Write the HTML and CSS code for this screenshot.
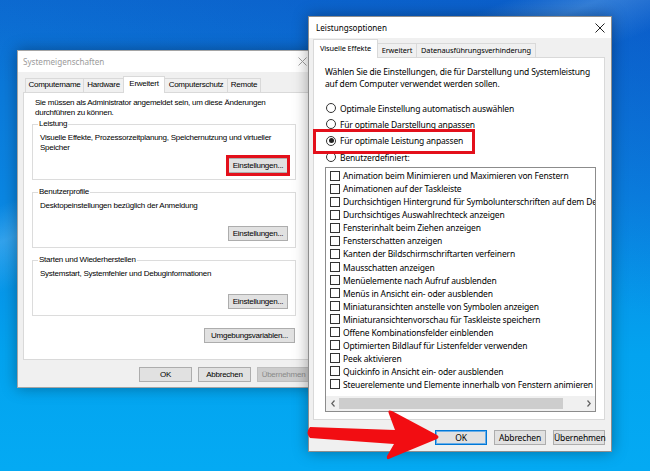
FILE: index.html
```html
<!DOCTYPE html>
<html lang="de">
<head>
    <meta charset="UTF-8">
    <meta name="viewport" content="width=device-width, initial-scale=1.0">
    <title>Leistungsoptionen</title>
    <link rel="stylesheet" href="styles.css">
</head>
<body>
    <div class="desktop">

        <!-- Systemeigenschaften (inaktiv) -->
        <section class="window window-sys">
            <div class="titlebar">
                <span class="title">Systemeigenschaften</span>
                <span class="close"><svg width="9" height="9" viewBox="0 0 9 9"><path d="M0.5 0.5L8.5 8.5M8.5 0.5L0.5 8.5"/></svg></span>
            </div>
            <div class="window-body">
                <ul class="tabs">
                    <li class="tab tab-computername">Computername</li>
                    <li class="tab tab-hardware">Hardware</li>
                    <li class="tab tab-active tab-erweitert">Erweitert</li>
                    <li class="tab tab-schutz">Computerschutz</li>
                    <li class="tab tab-remote">Remote</li>
                </ul>
                <div class="tab-panel">
                    <p class="intro">Sie müssen als Administrator angemeldet sein, um diese Änderungen<br>durchführen zu können.</p>

                    <fieldset class="group">
                        <legend>Leistung</legend>
                        <p>Visuelle Effekte, Prozessorzeitplanung, Speichernutzung und virtueller<br>Speicher</p>
                        <div class="group-actions"><button class="btn btn-settings">Einstellungen...</button></div>
                    </fieldset>

                    <fieldset class="group">
                        <legend>Benutzerprofile</legend>
                        <p>Desktopeinstellungen bezüglich der Anmeldung</p>
                        <div class="group-actions"><button class="btn btn-settings">Einstellungen...</button></div>
                    </fieldset>

                    <fieldset class="group">
                        <legend>Starten und Wiederherstellen</legend>
                        <p>Systemstart, Systemfehler und Debuginformationen</p>
                        <div class="group-actions"><button class="btn btn-settings">Einstellungen...</button></div>
                    </fieldset>

                    <div class="env-row"><button class="btn btn-env">Umgebungsvariablen...</button></div>
                </div>
                <div class="dialog-buttons">
                    <button class="btn">OK</button>
                    <button class="btn">Abbrechen</button>
                    <button class="btn btn-disabled">Übernehmen</button>
                </div>
            </div>
        </section>

        <!-- Leistungsoptionen (aktiv) -->
        <section class="window window-perf">
            <div class="titlebar">
                <span class="title">Leistungsoptionen</span>
                <span class="close"><svg width="10" height="10" viewBox="0 0 10 10"><path d="M0.5 0.5L9.5 9.5M9.5 0.5L0.5 9.5"/></svg></span>
            </div>
            <div class="window-body">
                <ul class="tabs">
                    <li class="tab tab-active tab-visual">Visuelle Effekte</li>
                    <li class="tab tab-advanced">Erweitert</li>
                    <li class="tab tab-dep">Datenausführungsverhinderung</li>
                </ul>
                <div class="tab-panel">
                    <p class="intro">Wählen Sie die Einstellungen, die für Darstellung und Systemleistung<br>auf dem Computer verwendet werden sollen.</p>

                    <ul class="radios">
                        <li><span class="radio"></span>Optimale Einstellung automatisch auswählen</li>
                        <li><span class="radio"></span>Für optimale Darstellung anpassen</li>
                        <li><span class="radio radio-checked"></span>Für optimale Leistung anpassen</li>
                        <li><span class="radio"></span>Benutzerdefiniert:</li>
                    </ul>

                    <div class="listbox">
                        <ul class="checklist">
                            <li><span class="check"></span>Animation beim Minimieren und Maximieren von Fenstern</li>
                            <li><span class="check"></span>Animationen auf der Taskleiste</li>
                            <li><span class="check"></span>Durchsichtigen Hintergrund für Symbolunterschriften auf dem Desktop verwenden</li>
                            <li><span class="check"></span>Durchsichtiges Auswahlrechteck anzeigen</li>
                            <li><span class="check"></span>Fensterinhalt beim Ziehen anzeigen</li>
                            <li><span class="check"></span>Fensterschatten anzeigen</li>
                            <li><span class="check"></span>Kanten der Bildschirmschriftarten verfeinern</li>
                            <li><span class="check"></span>Mausschatten anzeigen</li>
                            <li><span class="check"></span>Menüelemente nach Aufruf ausblenden</li>
                            <li><span class="check"></span>Menüs in Ansicht ein- oder ausblenden</li>
                            <li><span class="check"></span>Miniaturansichten anstelle von Symbolen anzeigen</li>
                            <li><span class="check"></span>Miniaturansichtenvorschau für Taskleiste speichern</li>
                            <li><span class="check"></span>Offene Kombinationsfelder einblenden</li>
                            <li><span class="check"></span>Optimierten Bildlauf für Listenfelder verwenden</li>
                            <li><span class="check"></span>Peek aktivieren</li>
                            <li><span class="check"></span>Quickinfo in Ansicht ein- oder ausblenden</li>
                            <li><span class="check"></span>Steuerelemente und Elemente innerhalb von Fenstern animieren</li>
                        </ul>
                        <div class="hscroll">
                            <span class="scroll-arrow"><svg width="4" height="7" viewBox="0 0 4 7"><path d="M3.5 0.5L0.8 3.5L3.5 6.5"/></svg></span>
                            <span class="scroll-track"><span class="scroll-thumb"></span></span>
                            <span class="scroll-arrow"><svg width="4" height="7" viewBox="0 0 4 7"><path d="M0.5 0.5L3.2 3.5L0.5 6.5"/></svg></span>
                        </div>
                    </div>
                </div>
                <div class="dialog-buttons">
                    <button class="btn btn-default">OK</button>
                    <button class="btn">Abbrechen</button>
                    <button class="btn">Übernehmen</button>
                </div>
            </div>
        </section>

        <!-- Markierungen -->
        <div class="highlight highlight-settings"></div>
        <div class="highlight highlight-option"></div>
        <svg class="pointer-arrow" width="150" height="70" viewBox="0 0 150 70">
            <path d="M10 27 L95 30 L89 14 Q87 9 92 11 L137 35 Q140 37 137 39 L91 58 Q86 61 87 56 L94 44 L10 38 Q5 33 10 27 Z"/>
        </svg>
    </div>
</body>
</html>
```

FILE: styles.css
```css
* {
    margin: 0;
    padding: 0;
    box-sizing: border-box;
}

html, body {
    width: 650px;
    height: 471px;
    overflow: hidden;
}

body {
    font-family: "Liberation Sans", Arial, sans-serif;
    color: #000;
}

.desktop {
    position: relative;
    width: 650px;
    height: 471px;
    background:
        linear-gradient(158deg, rgba(255,255,255,0) 28%, rgba(160,215,255,0.28) 33%, rgba(255,255,255,0) 40%),
        linear-gradient(200deg, rgba(10,70,190,0.45) 0%, rgba(10,70,190,0) 45%),
        linear-gradient(180deg, #0c6ed2 0%, #0a86e2 42%, #03a3ef 75%, #04aaf3 100%);
}

/* Fenster */

.window {
    position: absolute;
    display: flex;
    flex-direction: column;
    background: #f0f0f0;
    box-shadow: 0 0 14px rgba(0,0,0,0.35);
}

.window-sys {
    left: 17px;
    top: 50px;
    width: 301px;
    height: 338px;
    border: 1px solid #a5a5a5;
    z-index: 1;
    font-size: 8px;
    letter-spacing: -0.25px;
}

.window-perf {
    left: 308px;
    top: 16px;
    width: 304px;
    height: 436px;
    border: 1px solid #8e8e8e;
    z-index: 2;
    font-family: "Noto Sans", "Open Sans", sans-serif;
    font-size: 8.5px;
    letter-spacing: -0.15px;
}

.titlebar {
    flex: none;
    height: 21px;
    display: flex;
    align-items: center;
    justify-content: space-between;
    background: #fff;
    font-family: "Noto Sans", sans-serif;
    font-size: 8.1px;
    letter-spacing: 0;
}

.window-sys .titlebar {
    padding-left: 5px;
    color: #9b9b9b;
}

.window-perf .titlebar {
    padding-left: 7px;
}

.close {
    display: flex;
    align-items: center;
    justify-content: center;
    height: 100%;
}

.window-sys .close {
    width: 30px;
}

.window-perf .close {
    width: 22px;
}

.close path {
    fill: none;
    stroke-width: 1;
}

.window-sys .close path {
    stroke: #a0a0a0;
}

.window-perf .close path {
    stroke: #222;
}

.window-body {
    flex: 1;
    display: flex;
    flex-direction: column;
}

.window-sys .window-body {
    padding: 4px 5px 0 5px;
}

.window-perf .window-body {
    padding: 1px 6px 0 4px;
}

/* Reiter */

.tabs {
    list-style: none;
    display: flex;
    align-items: flex-end;
    height: 16px;
    padding-left: 2px;
}

.tab {
    height: 14px;
    line-height: 12px;
    text-align: center;
    white-space: nowrap;
    background: #f0f0f0;
    border: 1px solid #d9d9d9;
    border-bottom: none;
    margin-right: -1px;
}

.tab-active {
    position: relative;
    z-index: 1;
    height: 17px;
    line-height: 14px;
    margin-bottom: -1px;
    background: #fff;
}

.tab-computername { width: 59px; }
.tab-hardware { width: 41px; }
.tab-erweitert { width: 42px; }
.tab-schutz { width: 64px; }
.tab-remote { width: 34px; }

.window-perf .tabs {
    height: 18px;
    padding-left: 0;
}

.window-perf .tab {
    font-size: 7.4px;
    letter-spacing: -0.1px;
}

.window-perf .tab-active {
    height: 19px;
    line-height: 16px;
}

.tab-visual { width: 65px; }
.tab-advanced { width: 40px; }
.tab-dep { width: 120px; }

.tab-panel {
    background: #fff;
    border: 1px solid #d9d9d9;
}

.window-sys .tab-panel {
    height: 268px;
    padding: 5px 0 0 8px;
}

.window-perf .tab-panel {
    height: 363px;
    padding: 8px 0 0 11px;
}

/* Systemeigenschaften Inhalt */

.window-sys .intro {
    line-height: 10px;
    margin-left: 3px;
}

.group {
    width: 264px;
    min-width: 0;
    margin-top: 7px;
    border: 1px solid #dcdcdc;
    padding: 0 7px 6px 7px;
}

.window-sys .intro + .group {
    margin-top: 1px;
}

.group legend {
    line-height: 10px;
    padding: 0 1px;
    margin-left: -2px;
}

.group p {
    margin-top: 4px;
    min-height: 25px;
    line-height: 10px;
}

.group-actions {
    display: flex;
    justify-content: flex-end;
}

.env-row {
    width: 264px;
    display: flex;
    justify-content: flex-end;
    margin-top: 12px;
    padding-right: 1px;
}

/* Buttons */

.btn {
    height: 15px;
    width: 53px;
    font: inherit;
    letter-spacing: inherit;
    color: #000;
    background: #e1e1e1;
    border: 1px solid #adadad;
    line-height: 12px;
    text-align: center;
    white-space: nowrap;
}

.btn-settings {
    width: 60px;
}

.btn-env {
    width: 91px;
}

.btn-disabled {
    color: #8a8a8a;
    background: #cccccc;
    border-color: #bfbfbf;
}

.btn-default {
    border-color: #0078d7;
    box-shadow: inset 0 0 0 1px #6aaee8;
}

.dialog-buttons {
    display: flex;
    justify-content: flex-end;
}

.window-sys .dialog-buttons {
    gap: 6px;
    margin-top: 7px;
    padding-right: 2px;
}

.window-perf .dialog-buttons {
    gap: 7px;
    margin-top: 10px;
}

.window-perf .btn {
    width: 52px;
}

/* Leistungsoptionen Inhalt */

.window-perf .intro {
    line-height: 12px;
}

.radios {
    list-style: none;
    margin-top: 10px;
}

.radios li {
    display: flex;
    align-items: center;
    height: 16.3px;
    white-space: nowrap;
}

.radio {
    flex: none;
    width: 10px;
    height: 10px;
    margin: 0 4px 0 1px;
    border: 1px solid #333;
    border-radius: 50%;
    background: #fff;
    display: flex;
    align-items: center;
    justify-content: center;
}

.radio-checked::after {
    content: "";
    width: 5px;
    height: 5px;
    border-radius: 50%;
    background: #222;
}

.listbox {
    width: 271px;
    height: 245px;
    margin-top: 2px;
    border: 1px solid #8c8c8c;
    display: flex;
    flex-direction: column;
    overflow: hidden;
}

.checklist {
    list-style: none;
    flex: 1;
    overflow: hidden;
    padding: 1px 0 0 4px;
}

.checklist li {
    display: flex;
    align-items: center;
    height: 13.05px;
    white-space: nowrap;
}

.check {
    flex: none;
    width: 10px;
    height: 10px;
    margin-right: 3px;
    border: 1px solid #333;
    background: #fff;
}

.hscroll {
    flex: none;
    height: 15px;
    display: flex;
    align-items: center;
    background: #f0f0f0;
}

.scroll-arrow {
    width: 13px;
    height: 15px;
    display: flex;
    align-items: center;
    justify-content: center;
}

.scroll-arrow path {
    fill: none;
    stroke: #606060;
    stroke-width: 1.2;
}

.scroll-track {
    flex: 1;
    height: 11px;
}

.scroll-thumb {
    display: block;
    width: 224px;
    height: 11px;
    background: #cdcdcd;
}

/* Markierungen */

.highlight {
    position: absolute;
    border: 3px solid #e3101b;
    z-index: 3;
}

.highlight-settings {
    left: 226px;
    top: 155px;
    width: 64px;
    height: 21px;
}

.highlight-option {
    left: 313px;
    top: 129px;
    width: 162px;
    height: 25px;
}

.pointer-arrow {
    position: absolute;
    left: 300px;
    top: 400px;
    z-index: 4;
}

.pointer-arrow path {
    fill: #f20d12;
}
```
